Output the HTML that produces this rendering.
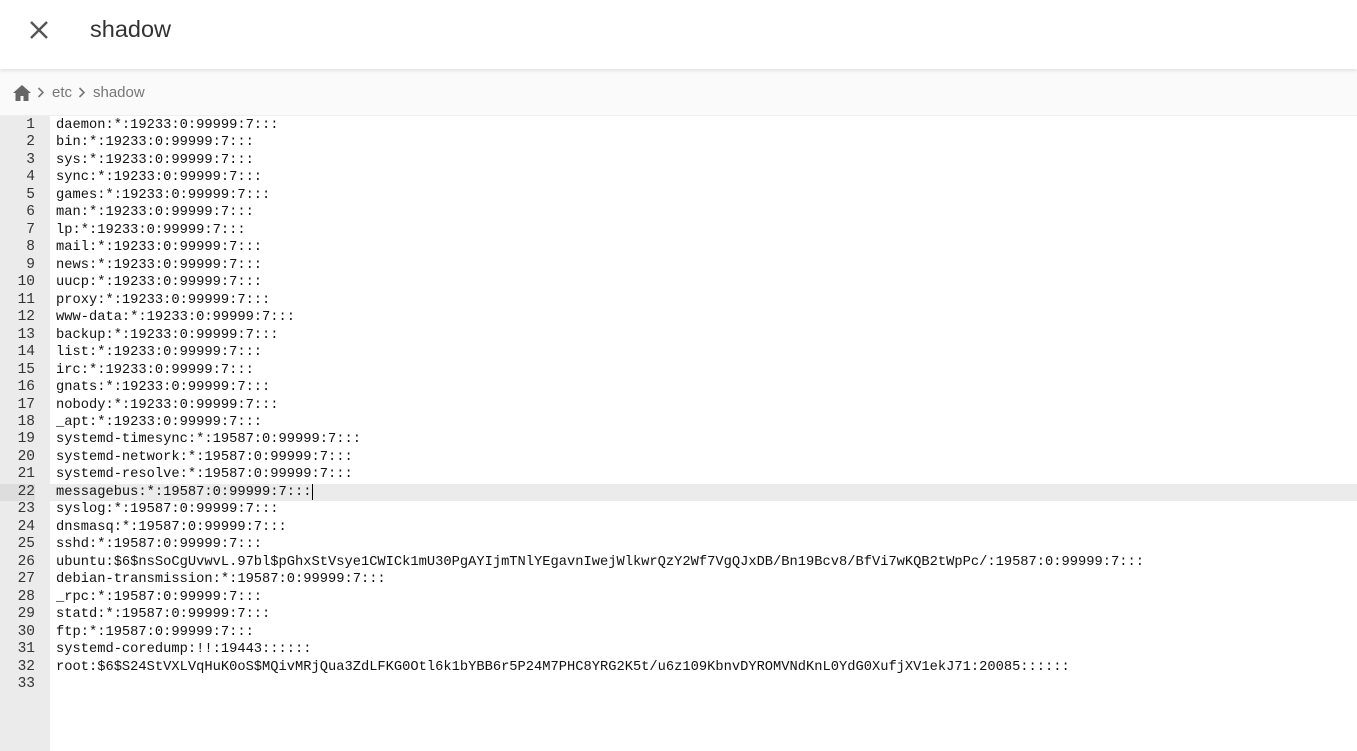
<!DOCTYPE html>
<html><head><meta charset="utf-8"><style>
body{margin:0;width:1357px;height:751px;overflow:hidden;background:#fff;font-family:"Liberation Sans",sans-serif}
.top{position:absolute;left:0;top:0;width:1357px;height:69px;background:#fff;box-shadow:0 1px 4px rgba(0,0,0,.15);z-index:2}
.title{position:absolute;left:90px;top:16px;font-size:23.5px;color:#333}
.bc{position:absolute;left:0;top:70px;width:1357px;height:45px;background:#fafafa;border-bottom:1px solid #eee}
.bc span{position:absolute;top:14px;font-size:15px;color:#777}
.gut{position:absolute;left:0;top:116px;width:50px;height:635px;background:#ebebeb}
.code{position:absolute;left:0;top:117px;width:1357px;font-family:"Liberation Mono",monospace;font-size:13.74px;line-height:17.48px;color:#111}
.ln{display:flex;height:17.48px;white-space:pre}
.n{width:35px;text-align:right;color:#333;margin-right:21px;font-size:14.5px}
.hl{background:#ebebeb}
.hl .n{background:#ddd;}
.cur{display:inline-block;width:1.5px;height:16px;background:#000;vertical-align:-3px}
</style></head><body>
<div class="top">
<svg style="position:absolute;left:29px;top:20px" width="20" height="20" viewBox="0 0 20 20"><path d="M2 2L18 18M18 2L2 18" stroke="#555" stroke-width="2.4"/></svg>
<div class="title">shadow</div></div>
<div class="bc">
<svg style="position:absolute;left:13px;top:15px" width="18" height="16" viewBox="0 0 18 16"><path d="M9 0L0 8h2.5v8h5v-5h3v5h5V8H18z" fill="#666"/></svg>
<svg style="position:absolute;left:37px;top:17px" width="8" height="11" viewBox="0 0 8 11"><path d="M1.5 1l4.5 4.5L1.5 10" stroke="#777" stroke-width="1.6" fill="none"/></svg>
<span style="left:52px">etc</span>
<svg style="position:absolute;left:78px;top:17px" width="8" height="11" viewBox="0 0 8 11"><path d="M1.5 1l4.5 4.5L1.5 10" stroke="#777" stroke-width="1.6" fill="none"/></svg>
<span style="left:93px">shadow</span>
</div>
<div class="gut"></div>
<div class="code">
<div class="ln"><span class="n">1</span>daemon:*:19233:0:99999:7:::</div>
<div class="ln"><span class="n">2</span>bin:*:19233:0:99999:7:::</div>
<div class="ln"><span class="n">3</span>sys:*:19233:0:99999:7:::</div>
<div class="ln"><span class="n">4</span>sync:*:19233:0:99999:7:::</div>
<div class="ln"><span class="n">5</span>games:*:19233:0:99999:7:::</div>
<div class="ln"><span class="n">6</span>man:*:19233:0:99999:7:::</div>
<div class="ln"><span class="n">7</span>lp:*:19233:0:99999:7:::</div>
<div class="ln"><span class="n">8</span>mail:*:19233:0:99999:7:::</div>
<div class="ln"><span class="n">9</span>news:*:19233:0:99999:7:::</div>
<div class="ln"><span class="n">10</span>uucp:*:19233:0:99999:7:::</div>
<div class="ln"><span class="n">11</span>proxy:*:19233:0:99999:7:::</div>
<div class="ln"><span class="n">12</span>www-data:*:19233:0:99999:7:::</div>
<div class="ln"><span class="n">13</span>backup:*:19233:0:99999:7:::</div>
<div class="ln"><span class="n">14</span>list:*:19233:0:99999:7:::</div>
<div class="ln"><span class="n">15</span>irc:*:19233:0:99999:7:::</div>
<div class="ln"><span class="n">16</span>gnats:*:19233:0:99999:7:::</div>
<div class="ln"><span class="n">17</span>nobody:*:19233:0:99999:7:::</div>
<div class="ln"><span class="n">18</span>_apt:*:19233:0:99999:7:::</div>
<div class="ln"><span class="n">19</span>systemd-timesync:*:19587:0:99999:7:::</div>
<div class="ln"><span class="n">20</span>systemd-network:*:19587:0:99999:7:::</div>
<div class="ln"><span class="n">21</span>systemd-resolve:*:19587:0:99999:7:::</div>
<div class="ln hl"><span class="n">22</span>messagebus:*:19587:0:99999:7:::<span class="cur"></span></div>
<div class="ln"><span class="n">23</span>syslog:*:19587:0:99999:7:::</div>
<div class="ln"><span class="n">24</span>dnsmasq:*:19587:0:99999:7:::</div>
<div class="ln"><span class="n">25</span>sshd:*:19587:0:99999:7:::</div>
<div class="ln"><span class="n">26</span>ubuntu:$6$nsSoCgUvwvL.97bl$pGhxStVsye1CWICk1mU30PgAYIjmTNlYEgavnIwejWlkwrQzY2Wf7VgQJxDB/Bn19Bcv8/BfVi7wKQB2tWpPc/:19587:0:99999:7:::</div>
<div class="ln"><span class="n">27</span>debian-transmission:*:19587:0:99999:7:::</div>
<div class="ln"><span class="n">28</span>_rpc:*:19587:0:99999:7:::</div>
<div class="ln"><span class="n">29</span>statd:*:19587:0:99999:7:::</div>
<div class="ln"><span class="n">30</span>ftp:*:19587:0:99999:7:::</div>
<div class="ln"><span class="n">31</span>systemd-coredump:!!:19443::::::</div>
<div class="ln"><span class="n">32</span>root:$6$S24StVXLVqHuK0oS$MQivMRjQua3ZdLFKG0Otl6k1bYBB6r5P24M7PHC8YRG2K5t/u6z109KbnvDYROMVNdKnL0YdG0XufjXV1ekJ71:20085::::::</div>
<div class="ln"><span class="n">33</span></div>
</div>
</body></html>
